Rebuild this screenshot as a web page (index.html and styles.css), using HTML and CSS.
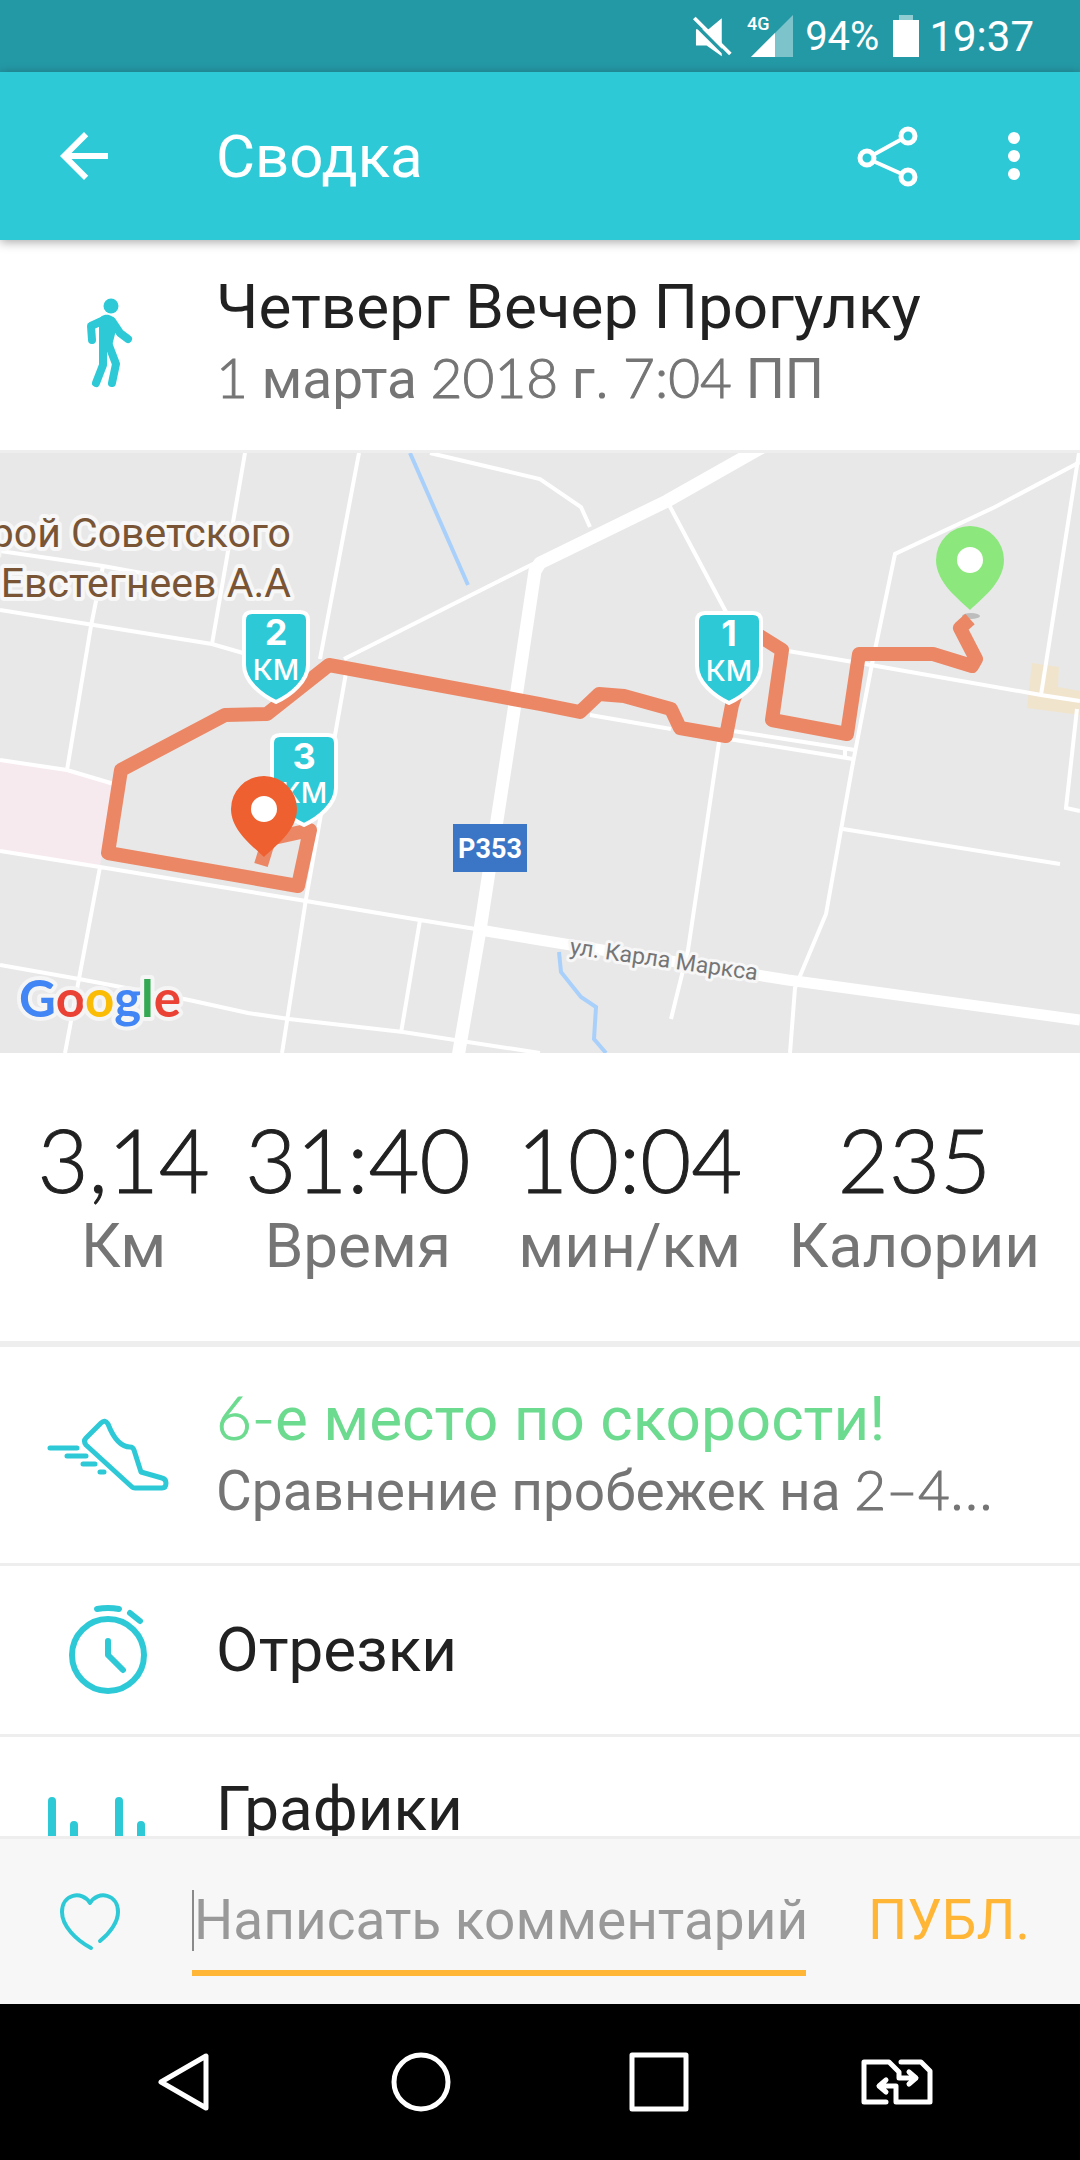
FILE: index.html
```html
<!DOCTYPE html>
<html lang="ru">
<head>
<meta charset="utf-8">
<meta name="viewport" content="width=device-width, initial-scale=1">
<title>Сводка</title>
<link rel="stylesheet" href="styles.css">
</head>
<body class="screen">
  <div class="status">
    <svg class="status-mute" viewBox="90 40 130 130" aria-hidden="true">
      <path fill="#fff" d="M105 83h38l40-33v115l-46-33h-32z"/>
      <path class="mute-gap" d="M90 56l110 110"/>
      <path stroke="#fff" stroke-width="11" d="M100 49l109 109"/>
    </svg>
    <svg class="status-signal" viewBox="0 0 46 44" aria-hidden="true">
      <path fill="#7cc3cb" d="M4 43L46 1v42z"/>
      <path fill="#fff" d="M4 43l24-24v24z"/>
      <text class="signal-label" x="0" y="16">4G</text>
    </svg>
    <span class="status-percent">94%</span>
    <svg class="status-battery" viewBox="0 0 26 42" aria-hidden="true">
      <path fill="#8fcdd3" d="M6 0h14v5H6z"/>
      <path fill="#fff" d="M0 5h26v37H0z"/>
    </svg>
    <span class="status-time">19:37</span>
  </div>

  <header class="appbar">
    <button class="icon-btn" aria-label="Назад">
      <svg class="icon" viewBox="0 0 24 24"><path fill="#fff" d="M20 11H7.83l5.59-5.59L12 4l-8 8 8 8 1.41-1.41L7.83 13H20z"/></svg>
    </button>
    <h1 class="appbar-title">Сводка</h1>
    <button class="icon-btn" aria-label="Поделиться">
      <svg class="icon" viewBox="852 120 72 72" fill="none" stroke="#fff" stroke-width="5">
        <circle cx="867" cy="158" r="7"/><circle cx="908" cy="136" r="7"/><circle cx="908" cy="177" r="7"/>
        <path stroke-width="4" d="M873 155l29-16M873 161l29 13"/>
      </svg>
    </button>
    <button class="icon-btn" aria-label="Ещё">
      <svg class="icon" viewBox="0 0 72 72" fill="#fff"><circle cx="36" cy="18" r="6"/><circle cx="36" cy="36" r="6"/><circle cx="36" cy="54" r="6"/></svg>
    </button>
  </header>

  <main class="content">
    <section class="row row-head">
      <div class="row-icon">
        <svg class="icon-walk" viewBox="82 298 52 94" fill="none" stroke="#2dc9d7" stroke-width="8" stroke-linecap="round" stroke-linejoin="round">
          <circle cx="111" cy="306" r="7.500" fill="#2dc9d7" stroke="none"/>
          <path d="M92 340l-1-14 13-6"/>
          <path d="M112 321l8 12 8 6"/>
          <path d="M103 345v20l-7 18M108 343l8 21-4 19"/>
          <path fill="#2dc9d7" stroke="none" d="M99 322c0-9 14-10 17 0l-1 12-3 12-3 6h-10z"/>
        </svg>
      </div>
      <div class="row-text">
        <h2 class="line title">Четверг Вечер Прогулку</h2>
        <p class="line sub"><span class="num">1</span> марта <span class="num">2018</span> г. <span class="num">7:04</span> ПП</p>
      </div>
    </section>

    <svg class="map" viewBox="0 0 1080 600" preserveAspectRatio="xMidYMid slice" role="img" aria-label="Карта маршрута">
      <defs>
        <g id="shield">
          <path fill="#2dc9d7" stroke="#fff" stroke-width="4" stroke-linejoin="round" d="M-24 2h48q8 0 8 8v45c0 16-17 30-32 37-15-7-32-21-32-37V10q0-8 8-8z"/>
          <text class="shield-unit" x="0" y="70">КМ</text>
        </g>
      </defs>
      <path fill="#e8e8e8" d="M0 0h1080v600H0z"/>
      <path fill="#f7eaee" d="M0 307l67 10 47 14-14 82-100-15z"/>
      <path fill="#f0e4cd" d="M1032 210l27 4-1 20 22 4v24l-53-7z"/>
      <g fill="none" stroke="#fff" stroke-width="4">
        <path d="M245 0l-33 191M359 0l-39 206M346 220l-40 226-24 154M430 0l110 26 41 28 9 20"/>
        <path d="M0 98l103 15 110 20M0 157l212 34 31 9M103 113L91 173 67 317M0 307l67 10 47 14"/>
        <path d="M0 398l100 16 206 34 114 19 62 10M100 414L65 600M0 512l79 14 110 21 59 13 41 6 114 13 137 21M420 467l-19 113M344 206l193-97"/>
        <path d="M667 48l59 111M788 198l83 14 170 30 39 6M1080 9l-85 45-100 47-24 115-19 99-26 146-26 62-5 12-5 65"/>
        <path d="M1079 0l-38 242M1077 256l-11 99 14 3M843 376l217 35M590 262l81 14M733 278l122 19M729 286l124 20M845 297v9M719 289l-31 208-17 69"/>
      </g>
      <g fill="none" stroke="#fff" stroke-width="13" stroke-linejoin="round">
        <path d="M766-8l-99 56-127 62-5 8-22 146-33 213-22 127"/>
        <path stroke-width="11" d="M480 477l60 10 248 40 292 40"/>
      </g>
      <path fill="none" stroke="#a9d0fb" stroke-width="4" d="M410 0l58 132M559 499l2 20 20 25 15 10-2 32 12 14"/>
      <text class="map-place" x="291" y="94">рой Советского</text>
      <text class="map-place" x="291" y="144">Евстегнеев А.А</text>
      <text class="map-street" transform="translate(569 501) rotate(8)">ул. Карла Маркса</text>
      <path fill="#3a76c5" d="M453 371h74v48h-74z"/>
      <text class="map-road" x="490" y="405">P353</text>
      <ellipse cx="971" cy="163" rx="9" ry="3" fill="#bdbdbd"/>
      <path fill="none" stroke="#eb8765" stroke-width="14" stroke-linejoin="round" d="M970 166L960 175 976 206 972 213 933 201H859L847 281 772 267 782 197 745 174M736 240L732 252 726 283 680 275 671 256 624 243 599 241 580 259 540 251 329 212 267 261 225 262 121 317 108 400 298 433 310 377 269 386 261 412"/>
      <use href="#shield" x="729" y="158"/><text class="shield-num" x="729" y="193">1</text>
      <use href="#shield" x="276" y="157"/><text class="shield-num" x="276" y="192">2</text>
      <use href="#shield" x="304" y="280"/><text class="shield-num" x="304" y="316">3</text>
      <path fill="#8ce87c" d="M970 157c-10-10-34-27-34-50a34 34 0 0 1 68 0c0 23-24 40-34 50z"/>
      <circle cx="970" cy="107" r="13" fill="#fff"/>
      <path fill="#ee602f" d="M264 404c-10-10-33-26-33-48a33 33 0 0 1 66 0c0 22-23 38-33 48z"/>
      <circle cx="264" cy="356" r="13" fill="#fff"/>
      <text class="map-logo" x="19" y="564"><tspan fill="#4285f4">G</tspan><tspan fill="#ea4335">o</tspan><tspan fill="#fbbc05">o</tspan><tspan fill="#4285f4">g</tspan><tspan fill="#34a853">l</tspan><tspan fill="#ea4335">e</tspan></text>
    </svg>

    <dl class="stats">
      <div class="stat"><dd class="stat-value">3,14</dd><dt class="stat-label">Км</dt></div>
      <div class="stat"><dd class="stat-value">31:40</dd><dt class="stat-label">Время</dt></div>
      <div class="stat"><dd class="stat-value">10:04</dd><dt class="stat-label">мин/км</dt></div>
      <div class="stat"><dd class="stat-value">235</dd><dt class="stat-label">Калории</dt></div>
    </dl>

    <a class="row row-tall" href="#rank">
      <span class="row-icon">
        <svg class="icon-shoe" viewBox="46 1418 124 74" fill="none" stroke="#2dc9d7" stroke-width="5" stroke-linecap="round" stroke-linejoin="round">
          <path d="M101 1423l-15 15q-3 3 0 7l46 42q1 1 3 1h27q4 0 4-5 0-4-4-5l-21-6-7-22q-1-3-4-3-13 0-22-23-3-5-7-1z"/>
          <path d="M50 1448h27M67 1456h19M83 1464h12M100 1472h4"/>
        </svg>
      </span>
      <span class="row-text">
        <span class="line title green"><span class="num">6-</span>е место по скорости!</span>
        <span class="line sub">Сравнение пробежек на <span class="num">2–4</span>...</span>
      </span>
    </a>
    <a class="row row-short" href="#splits">
      <span class="row-icon">
        <svg class="icon-timer" viewBox="64 1605 88 92" fill="none" stroke="#2dc9d7" stroke-width="6" stroke-linecap="round" stroke-linejoin="round">
          <circle cx="108" cy="1656" r="36"/>
          <path d="M108 1642v14l15 15M97 1610q11-2 22 0M130 1614l10 8"/>
        </svg>
      </span>
      <span class="row-text"><span class="line title">Отрезки</span></span>
    </a>
    <a class="row row-top" href="#charts">
      <span class="row-icon">
        <svg class="icon-bars" viewBox="0 0 120 96" stroke="#2dc9d7" stroke-width="8" stroke-linecap="round">
          <path d="M4 4v88M26 28v64M49 60v32M71 4v88M93 28v64M115 48v44"/>
        </svg>
      </span>
      <span class="row-text"><span class="line title">Графики</span></span>
    </a>
  </main>

  <form class="comment">
    <button class="like" type="button" aria-label="Нравится">
      <svg class="icon-heart" viewBox="58 1892 64 60" fill="none" stroke="#2dc9d7" stroke-width="4" stroke-linecap="round" stroke-linejoin="round">
        <path d="M100 1941c10-8 18-19 18-29 0-18-20-22-28-9-8-13-28-9-28 9 0 14 14 28 29 36"/>
      </svg>
    </button>
    <label class="field"><input class="field-input" type="text" placeholder="Написать комментарий" aria-label="Написать комментарий"></label>
    <button class="publish" type="button">ПУБЛ.</button>
  </form>

  <nav class="navbar">
    <button class="nav-btn" aria-label="Назад"><svg class="icon" viewBox="147 2046 72 72" fill="none" stroke="#fff" stroke-width="5" stroke-linejoin="round"><path d="M206 2056v52l-45-26z"/></svg></button>
    <button class="nav-btn" aria-label="Домой"><svg class="icon" viewBox="0 0 72 72" fill="none" stroke="#fff" stroke-width="5"><circle cx="36" cy="36" r="27"/></svg></button>
    <button class="nav-btn" aria-label="Обзор"><svg class="icon" viewBox="0 0 72 72" fill="none" stroke="#fff" stroke-width="5" stroke-linejoin="round"><path d="M9 9h54v54H9z"/></svg></button>
    <button class="nav-btn" aria-label="Сменить SIM"><svg class="icon" viewBox="861 2046 72 72" fill="none" stroke="#fff" stroke-width="5" stroke-linecap="round" stroke-linejoin="round">
      <path d="M886 2102h-22v-40h25l10 10v6h16M909 2072l7 6-7 6M901 2062h20l9 9v31h-34v-16h-16M886 2080l-7 6 7 6"/></svg></button>
  </nav>
</body>
</html>
```
FILE: styles.css
```css
* { box-sizing: border-box; }

.screen {
  margin: 0;
  height: 100vh;
  display: flex;
  flex-direction: column;
  background: #fff;
  color: #212121;
  font-family: Roboto, "Liberation Sans", sans-serif;
}

button {
  border: 0;
  padding: 0;
  background: none;
  font: inherit;
  color: inherit;
}

svg { display: block; }

/* Status bar */
.status {
  flex: none;
  display: flex;
  align-items: center;
  justify-content: flex-end;
  height: 72px;
  padding-right: 46px;
  background: #2499a6;
  color: #fff;
}
.status-mute { width: 43px; height: 43px; margin-right: 13px; }
.mute-gap { stroke: #2499a6; stroke-width: 10px; }
.status-signal { width: 46px; height: 44px; margin-right: 12px; }
.signal-label { font: 500 18px Roboto, sans-serif; fill: #fff; }
.status-percent { font-size: 40px; margin-right: 14px; }
.status-battery { width: 26px; height: 42px; margin-right: 10px; }
.status-time { font-size: 42px; }

/* App bar */
.appbar {
  flex: none;
  position: relative;
  display: flex;
  align-items: center;
  height: 168px;
  padding: 0 30px 0 48px;
  gap: 54px;
  background: #2dc9d7;
  color: #fff;
  box-shadow: 0 2px 10px rgba(0, 0, 0, 0.35);
}
.appbar-title {
  flex: 1;
  margin: 0 0 0 42px;
  font-size: 60px;
  font-weight: 400;
}
.icon-btn, .icon { width: 72px; height: 72px; }

/* Scrolling content */
.content {
  flex: 1;
  min-height: 0;
  display: flex;
  flex-direction: column;
  overflow: hidden;
}
.content > * { flex: none; }

.row {
  display: flex;
  align-items: center;
  border-bottom: 3px solid #eee;
  color: inherit;
  text-decoration: none;
}
.row-head { height: 213px; }
.row-head .row-text { padding-bottom: 4px; }
.row-tall { height: 219px; }
.row-short { height: 171px; }
.row-top { height: 219px; align-items: flex-start; padding-top: 36px; }
.row-top .row-icon { padding-top: 24px; justify-content: flex-start; padding-left: 48px; }

.row-icon {
  flex: none;
  display: flex;
  justify-content: center;
  width: 216px;
}
.row-text { flex: 1; min-width: 0; }
.line {
  display: block;
  margin: 0;
  line-height: 72px;
  white-space: nowrap;
  font-weight: 400;
}
.title { font-size: 62px; }
.sub { font-size: 55px; color: #757575; }
.green { color: #6cdb8f; }
.num {
  font-family: Lato, sans-serif;
  font-weight: 300;
  line-height: 1;
  -webkit-text-stroke: 1px currentColor;
}

.icon-walk { width: 52px; height: 94px; }
.icon-shoe { width: 124px; height: 74px; }
.icon-timer { width: 88px; height: 92px; }
.icon-bars { width: 120px; height: 96px; }

/* Map */
.map { width: 100%; height: 600px; }
.map-place {
  font: 400 41px Roboto, sans-serif;
  text-anchor: end;
  fill: #795536;
  stroke: #f7f7f7;
  stroke-width: 8px;
  stroke-linejoin: round;
  paint-order: stroke;
}
.map-street {
  font: 400 23px Roboto, sans-serif;
  fill: #757575;
  stroke: #f7f7f7;
  stroke-width: 6px;
  stroke-linejoin: round;
  paint-order: stroke;
}
.map-road { font: 700 27px Roboto, sans-serif; text-anchor: middle; fill: #fff; }
.map-logo {
  font: 700 51px Lato, sans-serif;
  stroke: #f5f5f5;
  stroke-width: 8px;
  stroke-linejoin: round;
  paint-order: stroke;
}
.shield-num { font: 700 36px Inter, sans-serif; text-anchor: middle; fill: #fff; }
.shield-unit { font: 500 29px Inter, sans-serif; text-anchor: middle; fill: #fff; }

/* Totals */
.stats {
  display: grid;
  grid-template-columns: 246fr 224fr 322fr 244fr;
  align-content: start;
  margin: 0;
  height: 294px;
  padding: 58px 40px 0 2px;
  border-bottom: 6px solid #eee;
  text-align: center;
}
.stat-value {
  margin: 0 0 3px;
  font: 300 88px/96px Lato, sans-serif;
  -webkit-text-stroke: 1px currentColor;
}
.stat-label {
  font-size: 62px;
  line-height: 72px;
  color: #757575;
}

/* Comment bar */
.comment {
  flex: none;
  display: flex;
  height: 168px;
  padding-right: 50px;
  border-top: 3px solid #eee;
  background: #f7f7f7;
}
.like { width: 192px; padding: 53px 58px; }
.icon-heart { width: 64px; height: 60px; }
.field {
  flex: 1;
  min-width: 0;
  align-self: flex-start;
  display: block;
  margin-top: 51px;
  padding-bottom: 19px;
  border-bottom: 6px solid #ffb637;
}
.field-input {
  display: block;
  width: 100%;
  height: 61px;
  padding: 0;
  border: 0;
  border-left: 2px solid #8a8a8a;
  border-radius: 0;
  outline: 0;
  background: none;
  font: 400 55px/61px Roboto, sans-serif;
  color: #212121;
}
.field-input::placeholder { color: #999; opacity: 1; }
.publish {
  align-self: flex-start;
  margin: 51px 0 0 62px;
  font-size: 55px;
  line-height: 61px;
  color: #ffb637;
}

/* System navigation */
.navbar {
  flex: none;
  display: flex;
  height: 156px;
  padding: 0 64px;
  background: #000;
}
.nav-btn {
  flex: 1;
  display: flex;
  align-items: center;
  justify-content: center;
}
```
